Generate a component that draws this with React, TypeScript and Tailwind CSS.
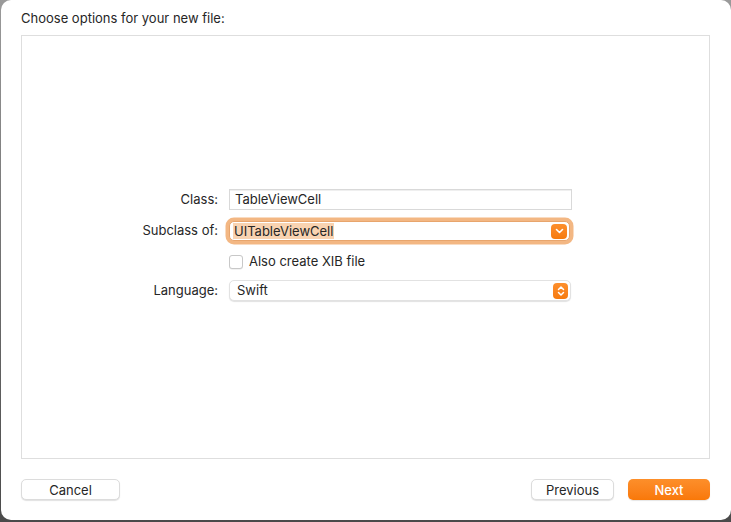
import React from 'react';

const font = { fontFamily: 'Inter, "Liberation Sans", sans-serif' };

const ChevronDown = () => (
  <svg width="9" height="6" viewBox="0 0 9 6" fill="none">
    <path d="M1.5 1.5 L4.5 4.5 L7.5 1.5" stroke="white" strokeWidth="1.6" strokeLinecap="round" strokeLinejoin="round" />
  </svg>
);

const UpDown = () => (
  <svg width="8" height="12" viewBox="0 0 8 12" fill="none">
    <path d="M1.5 4.5 L4 2 L6.5 4.5" stroke="white" strokeWidth="1.5" strokeLinecap="round" strokeLinejoin="round" />
    <path d="M1.5 7.5 L4 10 L6.5 7.5" stroke="white" strokeWidth="1.5" strokeLinecap="round" strokeLinejoin="round" />
  </svg>
);

export default function App() {
  return (
    <div className="w-[731px] h-[522px] bg-gradient-to-b from-[#9a9a9a] to-[#4a4a4a] text-[13px] text-[#262626] antialiased" style={font}>
      <div className="ml-[1px] w-[730px] h-[520px] bg-white rounded-[10px] flex flex-col">
        <div className="pl-[20px] pt-[10px] h-[35px] leading-[16px]">Choose options for your new file:</div>

        <div className="ml-[20px] mr-[21px] h-[424px] border border-[#dedede] flex flex-col justify-center pb-[4px]">
          <div className="ml-[77px] grid grid-cols-[120px_343px] gap-x-[10px] items-center">
            <div className="text-right pr-[1px]">Class:</div>
            <div className="h-[21px] border border-[#d9d9d9] bg-white flex items-center px-[5px] shadow-[inset_0_1px_0_#efefef]">
              TableViewCell
            </div>

            <div className="text-right pr-[1px] mt-[11px]">Subclass of:</div>
            <div className="mt-[11px] w-[341px] h-[20px] rounded-[5px] bg-white flex items-center justify-between pl-[3px] pr-[2px] ring-[3.5px] ring-[#f3b783] border border-[#e8a56d]">
              <span className="bg-[#f9d3b1] px-[1px] leading-[16px]">UITableViewCell</span>
              <span className="w-[16px] h-[15px] rounded-[4px] bg-gradient-to-b from-[#fd8f2c] to-[#f67a0b] flex items-center justify-center">
                <ChevronDown />
              </span>
            </div>

            <div className="mt-[13px]" />
            <div className="mt-[13px] flex items-center gap-[6px] h-[15px]">
              <span className="w-[14px] h-[14px] rounded-[3px] border border-[#c8c8c8] bg-white shadow-[0_0.5px_0_#e5e5e5]" />
              <span>Also create XIB file</span>
            </div>

            <div className="text-right pr-[1px] mt-[11px]">Language:</div>
            <div className="mt-[11px] w-[342px] h-[21px] rounded-[5px] bg-white flex items-center justify-between pl-[7px] pr-[2px] border border-[#e2e2e2] shadow-[0_1px_1px_rgba(0,0,0,0.12)]">
              <span>Swift</span>
              <span className="w-[15px] h-[16px] rounded-[4px] bg-gradient-to-b from-[#fd8f2c] to-[#f67a0b] flex items-center justify-center">
                <UpDown />
              </span>
            </div>
          </div>
        </div>

        <div className="flex items-center pl-[20px] pr-[21px] mt-[20px]">
          <button className="w-[99px] h-[21px] rounded-[5px] bg-white border border-[#dcdcdc] shadow-[0_1px_1px_rgba(0,0,0,0.12)] leading-[18px]">
            Cancel
          </button>
          <div className="flex-1" />
          <button className="w-[83px] h-[21px] rounded-[5px] bg-white border border-[#dcdcdc] shadow-[0_1px_1px_rgba(0,0,0,0.12)] leading-[18px]">
            Previous
          </button>
          <button className="ml-[14px] w-[82px] h-[21px] rounded-[5px] bg-gradient-to-b from-[#fd8f2a] to-[#f97807] text-white font-medium leading-[20px] shadow-[0_1px_1px_rgba(0,0,0,0.1)]">
            Next
          </button>
        </div>
      </div>
    </div>
  );
}
